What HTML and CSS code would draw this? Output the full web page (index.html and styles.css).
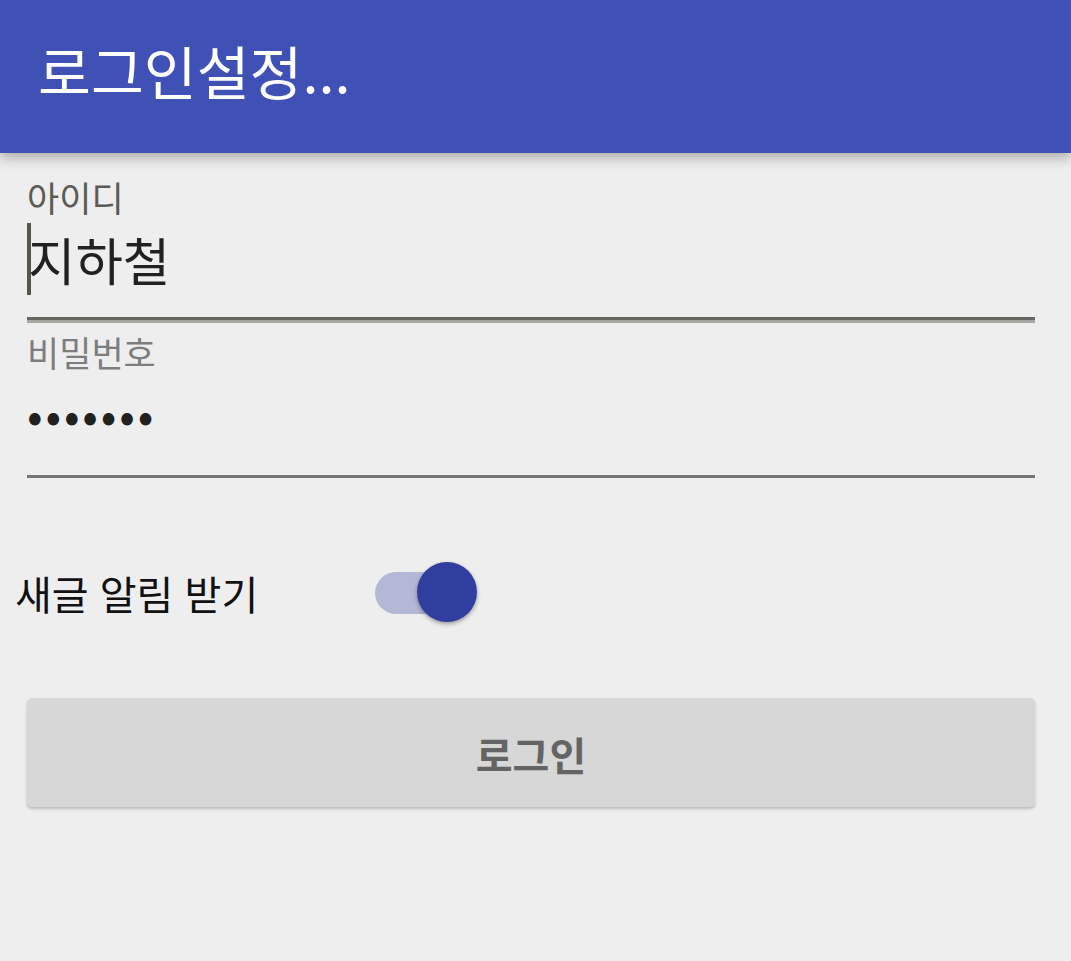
FILE: index.html
```html
<!DOCTYPE html>
<html lang="ko">
<head>
<meta charset="utf-8">
<link rel="stylesheet" href="styles.css">
</head>
<body>
<header class="appbar"><h1 class="title">로그인설정...</h1></header>
<main class="form">
  <div class="field field-id">
    <div class="label">아이디</div>
    <div class="value"><span class="cursor"></span>지하철</div>
  </div>
  <div class="field field-pw">
    <div class="label label-pw">비밀번호</div>
    <div class="dots">•••••••</div>
  </div>
  <div class="switch-row">
    <span class="switch-text">새글 알림 받기</span>
    <span class="switch"><span class="track"></span><span class="thumb"></span></span>
  </div>
  <button class="login">로그인</button>
</main>
</body>
</html>
```
FILE: styles.css
```css
html, body { margin: 0; padding: 0; }
body {
  background: #eeeeee;
  width: 1071px;
  height: 961px;
  overflow: hidden;
  font-family: "Noto Sans CJK KR", "Noto Sans", sans-serif;
}
.appbar {
  height: 153px;
  background: #3f51b5;
  box-shadow: 0 5px 12px rgba(0,0,0,0.28);
  display: flex;
  align-items: center;
  padding-left: 38px;
  position: relative;
  z-index: 1;
}
.title {
  margin: 0 0 14px 0;
  color: #ffffff;
  font-size: 57.5px;
  font-weight: 400;
  line-height: 64px;
}
.form {
  padding: 22px 36px 0 27px;
}
.label {
  font-size: 35px;
  line-height: 44px;
  color: #5b5b55;
}
.value {
  font-size: 51.5px;
  line-height: 72px;
  color: #212121;
  display: flex;
  align-items: center;
  height: 72px;
  margin-top: 4px;
}
.cursor {
  display: inline-block;
  width: 4px;
  height: 72px;
  background: #55554e;
  margin-right: -3px;
}
.field-id {
  border-bottom: 3px solid #676762;
  box-shadow: 0 3px 0 #a6a6a1;
  padding-bottom: 22px;
}
.field-pw {
  margin-top: 10px;
  border-bottom: 3px solid #737373;
  padding-bottom: 37px;
}
.label-pw { color: #7d7d7d; }
.dots {
  font-size: 46px;
  line-height: 50px;
  height: 50px;
  color: #212121;
  margin-top: 14px;
  letter-spacing: 2.8px;
  margin-left: 0;
}
.switch-row {
  display: flex;
  align-items: center;
  margin: 84px 0 0 -12px;
  height: 62px;
}
.switch-text {
  font-size: 40px;
  color: #111111;
  width: 360px;
}
.switch {
  position: relative;
  width: 104px;
  height: 62px;
  display: block;
}
.track {
  position: absolute;
  left: 0;
  top: 10px;
  width: 96px;
  height: 42px;
  border-radius: 21px;
  background: #b3b8d7;
}
.thumb {
  position: absolute;
  left: 42px;
  top: 0;
  width: 60px;
  height: 60px;
  border-radius: 50%;
  background: #303f9f;
  box-shadow: 0 2px 4px rgba(0,0,0,0.35);
}
.login {
  display: block;
  width: 100%;
  height: 109px;
  margin-top: 74px;
  padding: 2px 0 0 0;
  border: none;
  border-radius: 5px;
  background: #d6d7d6;
  box-shadow: 0 2px 3px rgba(0,0,0,0.22);
  font-family: "Noto Sans CJK KR", "Noto Sans", sans-serif;
  font-size: 40px;
  font-weight: 700;
  color: #646464;
}
```
